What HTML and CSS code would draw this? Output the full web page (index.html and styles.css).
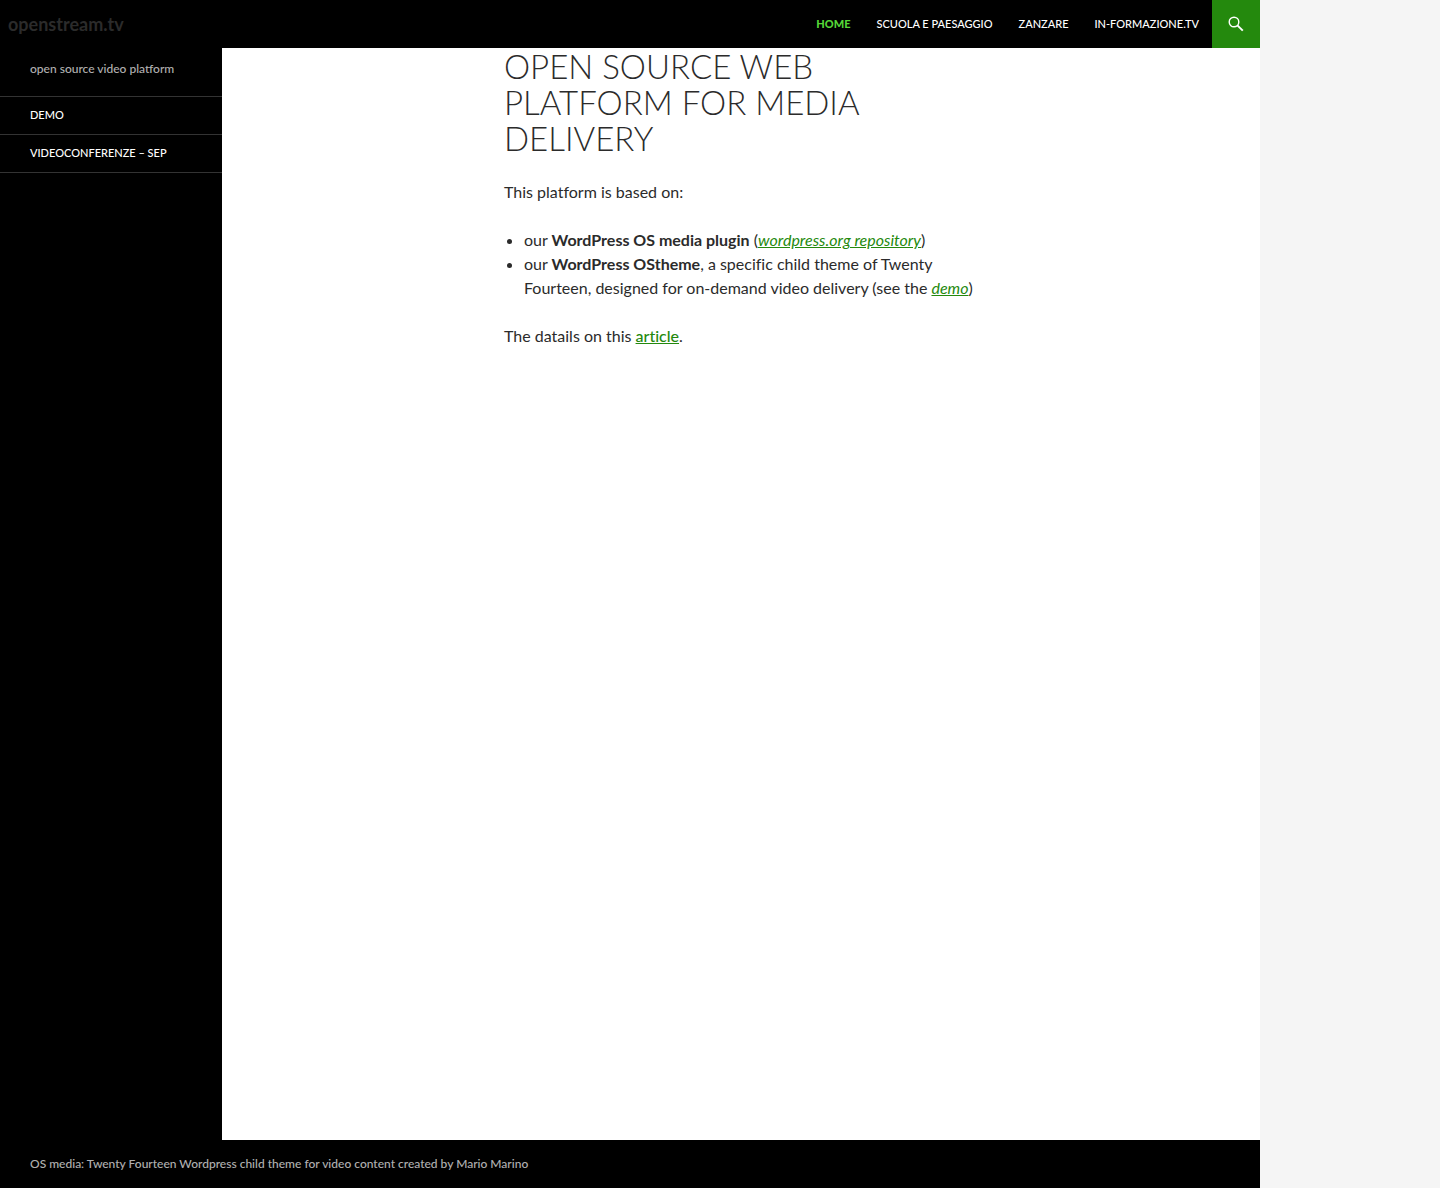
FILE: index.html
```html
<!DOCTYPE html>
<html lang="it">
<head>
<meta charset="utf-8">
<meta name="viewport" content="width=device-width, initial-scale=1">
<title>openstream.tv</title>
<link rel="stylesheet" href="styles.css">
</head>
<body>
<div class="site">
  <header class="masthead">
    <h1 class="site-title"><a href="#">openstream.tv</a></h1>
    <nav class="primary-nav" aria-label="Primary">
      <a class="current" href="#">Home</a>
      <a href="#">Scuola e Paesaggio</a>
      <a href="#">Zanzare</a>
      <a href="#">In-formazione.tv</a>
    </nav>
    <button class="search-toggle" type="button" aria-label="Search">
      <svg width="16" height="16" viewBox="0 0 16 16" fill="none" stroke="currentColor" aria-hidden="true">
        <circle cx="6" cy="6" r="4.8" stroke-width="1.4"/>
        <path d="M9.4 9.4L14.8 14.6" stroke-width="2"/>
      </svg>
    </button>
  </header>
  <div class="columns">
    <aside class="secondary">
      <h2 class="site-description">open source video platform</h2>
      <nav class="secondary-nav" aria-label="Secondary">
        <a href="#">Demo</a>
        <a href="#">Videoconferenze – SEP</a>
      </nav>
    </aside>
    <main class="content">
      <article class="entry">
        <h1 class="entry-title">Open source web platform for media delivery</h1>
        <p>This platform is based on:</p>
        <ul>
          <li>our <strong>WordPress OS media plugin</strong> (<a href="#"><em>wordpress.org repository</em></a>)</li>
          <li>our <strong>WordPress OStheme</strong>, a specific child theme of Twenty Fourteen, designed for on-demand video delivery (see the <a href="#"><em>demo</em></a>)</li>
        </ul>
        <p>The datails on this <a href="#">article</a>.</p>
      </article>
    </main>
  </div>
  <footer class="colophon">OS media: Twenty Fourteen Wordpress child theme for video content created by Mario Marino</footer>
</div>
</body>
</html>
```

FILE: styles.css
```css
* {
  box-sizing: border-box;
}

body {
  margin: 0;
  background: #f5f5f5;
  color: #2b2b2b;
  font: 400 16px/24px Lato, sans-serif;
}

a {
  color: #24890d;
}

.site {
  display: flex;
  flex-direction: column;
  max-width: 1260px;
  min-height: 100vh;
  background: #fff;
}

.masthead {
  display: flex;
  align-items: center;
  background: #000;
}

.site-title {
  margin: 0 auto 0 8px;
  font-size: 18px;
  font-weight: 700;
  line-height: 48px;
}

.site-title a {
  color: #2b2b2b;
  text-decoration: none;
}

.primary-nav {
  display: flex;
  gap: 26px;
  padding-right: 13px;
  font-size: 11px;
  font-weight: 500;
  line-height: 48px;
  text-transform: uppercase;
}

.primary-nav a,
.secondary-nav a {
  color: #fff;
  text-decoration: none;
}

.primary-nav .current {
  color: #55d737;
  font-weight: 900;
}

.search-toggle {
  display: flex;
  align-items: center;
  justify-content: center;
  width: 48px;
  height: 48px;
  padding: 0;
  border: 0;
  background: #24890d;
  color: #fff;
}

.columns {
  display: flex;
  flex: 1;
}

.secondary {
  width: 222px;
  background: #000;
}

.site-description {
  margin: 12px 30px 18px;
  color: rgba(255, 255, 255, 0.7);
  font-size: 12px;
  font-weight: 500;
  line-height: 18px;
}

.secondary-nav {
  border-bottom: 1px solid #333;
  font-size: 11px;
  font-weight: 500;
  line-height: 17px;
  text-transform: uppercase;
}

.secondary-nav a {
  display: block;
  padding: 9px 30px 11px;
  border-top: 1px solid #333;
}

.content {
  flex: 1;
}

.entry {
  max-width: 474px;
  margin: 0 auto;
  font-variant-ligatures: none;
}

.entry-title {
  margin: 0 0 24px;
  font-size: 33px;
  font-weight: 300;
  line-height: 36px;
  text-transform: uppercase;
}

.entry p,
.entry ul {
  margin: 0 0 24px;
}

.entry ul {
  padding-left: 20px;
}

.entry p a {
  font-weight: 500;
}

.colophon {
  padding: 15px 30px;
  background: #000;
  color: rgba(255, 255, 255, 0.7);
  font-size: 12px;
  font-weight: 500;
  line-height: 18px;
}
```
